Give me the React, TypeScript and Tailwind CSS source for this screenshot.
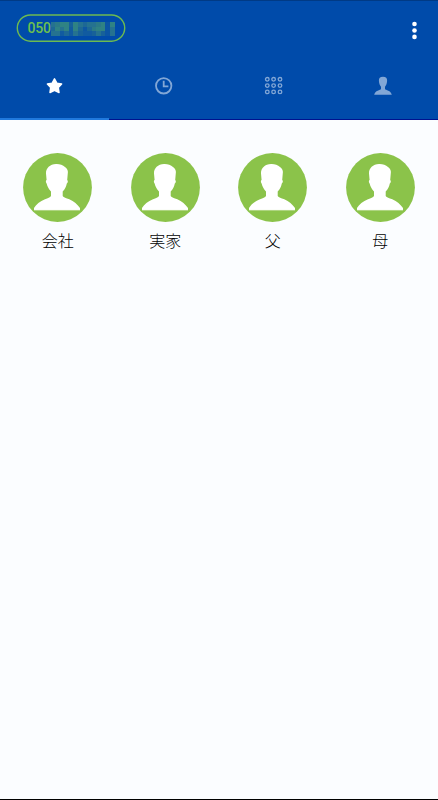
const Person = ({ className }: { className: string }) => (
  <svg viewBox="0 0 69 69" className={className}>
    <circle cx="34.5" cy="34.5" r="34.4" fill="#8bc34a" />
    <path
      fill="#fff"
      d="M33 11C27 11.2 22.8 15 23 20.5L23.6 27C22.6 27.6 22.7 29.2 23.6 30.6C24.4 34 25.8 36.2 28 38.5V43C27 44.6 25 45.2 22 46.3C17 48.3 13 51.5 11 55V57H57V55C54.5 51.5 51 48.3 46.3 46.3C43 45.2 40.7 44.6 39.7 43V38.5C42 36.2 43.2 34 43.8 30.6C45 29.4 45.2 27.8 44.2 27L44.9 19C44.9 17 44 15.5 42.3 14.2C39.5 12 36.5 10.8 33 11Z"
    />
    <path d="M11 57.4H57" stroke="#c5e1a4" strokeWidth="0.7" />
  </svg>
);

const mosaic = [
  ["#257290", "#2b7a87", "#2f8284", "#2f8284", "#176199", "#2f8284", "#257290", "#1d6895", "#257290", "#257290", "#2b7a87", "#2f8284", "#0b55a4", "#2f8284"],
  ["#1d6895", "#2f8284", "#257290", "#2f8284", "#115ba0", "#2f8284", "#1d6895", "#0d57a2", "#1d6895", "#2b7a87", "#2f8284", "#2f8284", "#0b55a4", "#257290"],
  ["#257290", "#257290", "#115ba0", "#1d6895", "#115ba0", "#257290", "#176199", "#115ba0", "#115ba0", "#176199", "#257290", "#176199", "#0b55a4", "#257290"],
];

const contacts = ["会社", "実家", "父", "母"];

export default function App() {
  return (
    <div className="flex h-[800px] w-[438px] flex-col overflow-hidden border-b border-black bg-[#fbfdff] font-['Roboto','Noto_Sans_CJK_JP',sans-serif]">
      <header className="flex h-[120px] shrink-0 flex-col border-t border-[#003a85] bg-[#004baa]">
        <div className="flex h-[51px] items-start justify-between pr-[20px] pl-[16px]">
          <div className="relative mt-[13px] flex h-[28px] w-[110px] items-center pl-[11.5px]">
            <svg viewBox="0 0 110 28" className="absolute inset-0 h-7 w-[110px]" fill="none">
              <rect x="1.3" y="1" width="107.4" height="26.2" rx="13.1" stroke="#6dbb50" strokeWidth="1.4" />
            </svg>
            <span className="w-[23px] text-[14px] leading-none font-medium tracking-[-0.2px] text-[#6dc04f]">050</span>
            <span className="mt-[2px] grid h-[14px] w-[64px] grid-cols-14">
              {mosaic.flat().map((c, i) => (
                <i key={i} style={{ backgroundColor: c }} />
              ))}
            </span>
          </div>
          <svg viewBox="0 0 8 20" className="mt-[20px] h-5 w-2" fill="#fff">
            <circle cx="4.5" cy="3" r="2.3" />
            <circle cx="4.5" cy="9.5" r="2.3" />
            <circle cx="4.5" cy="15.9" r="2.3" />
          </svg>
        </div>
        <nav className="grid flex-1 grid-cols-[109px_110px_110px_109px]">
          <div className="flex justify-center border-b-2 border-[#2079dd] pt-[24px]">
            <svg viewBox="0 0 20 20" className="h-5 w-5">
              <path
                d="M9.5 2.8L11.8 7.2L16.6 8L13.3 11.6L14 16.5L9.5 14.4L5 16.5L5.7 11.6L2.4 8L7.2 7.2Z"
                fill="#fff"
                stroke="#fff"
                strokeWidth="1.5"
                strokeLinejoin="round"
              />
            </svg>
          </div>
          <div className="flex justify-center border-b border-[#00128f] pt-[24px]">
            <svg viewBox="0 0 20 20" className="h-5 w-5" fill="none" stroke="#82a7d6" strokeWidth="1.8">
              <circle cx="9.7" cy="9.8" r="7.7" />
              <path d="M9.7 4.7V10.4H14.4" />
            </svg>
          </div>
          <div className="flex justify-center border-b border-[#00128f] pt-[24px]">
            <svg viewBox="0 0 20 20" className="h-5 w-5" fill="none" stroke="#82a7d6" strokeWidth="1.3">
              {[3.3, 9.6, 15.9].map((y) =>
                [3.3, 9.6, 16].map((x) => <circle key={`${x}-${y}`} cx={x} cy={y} r="1.8" />)
              )}
            </svg>
          </div>
          <div className="flex justify-center border-b border-[#00128f] pt-[24px]">
            <svg viewBox="0 0 20 20" className="h-5 w-5" fill="#82a7d6">
              <path d="M9 .8C6.1 .8 4.7 2.2 4.9 4.8C5 7.4 5.8 9.4 7 10.8V12.9C6.6 14.2 .8 14.2 .2 18.8H17.8C17.2 14.2 11.4 14.2 11 12.9V10.8C12.2 9.4 13 7.4 13.1 4.8C13.3 2.2 11.9 .8 9 .8Z" />
            </svg>
          </div>
        </nav>
      </header>
      <main className="grid grid-cols-4 px-[4px] pt-[33px]">
        {contacts.map((name) => (
          <div key={name} className="flex flex-col items-center">
            <Person className="h-[69px] w-[69px]" />
            <span className="mt-[8px] text-[16px] leading-6 font-light text-black">{name}</span>
          </div>
        ))}
      </main>
    </div>
  );
}
